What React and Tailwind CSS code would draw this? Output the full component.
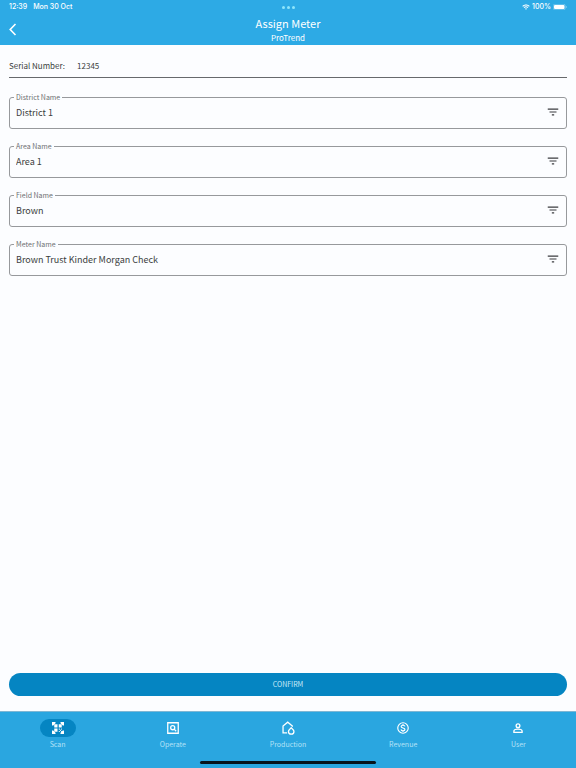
import React from 'react';
import { MdFilterList, MdWifi } from 'react-icons/md';

const fields = [
  { id: 'district', label: 'District Name', value: 'District 1' },
  { id: 'area', label: 'Area Name', value: 'Area 1' },
  { id: 'field', label: 'Field Name', value: 'Brown' },
  { id: 'meter', label: 'Meter Name', value: 'Brown Trust Kinder Morgan Check' },
];

function ScanIcon() {
  return (
    <svg viewBox="0 0 24 24" className="h-3 w-3" fill="currentColor" aria-hidden="true">
      <path d="M0 0h7v2.500L2.500 7H0zM17 0h7v7h-2.500L17 2.500zM0 17h2.500L7 21.500V24H0zM21.500 17H24v7h-7v-2.500z" />
      <path d="M4.500 4.500h6.500V11H4.500zM13.500 4.500h6V11h-6zM4.500 13H11v6.500H4.500z" />
      <path
        d="M13.500 13H16v2.500h-2.500zM18 13h2v2.500h-2zM16 15.500h2V18h-2zM13.500 18H16v2h-2.500zM18 18h2v2h-2z"
        opacity="0.8"
      />
    </svg>
  );
}

function OperateIcon() {
  return (
    <svg
      viewBox="0 0 24 24"
      className="h-3.5 w-3.5"
      fill="none"
      stroke="currentColor"
      strokeWidth="2.2"
      aria-hidden="true"
    >
      <path d="M3 3h18v18H3z" />
      <circle cx="11.5" cy="11.5" r="3.5" />
      <path d="M14 14l3.500 3.500" />
    </svg>
  );
}

function ProductionIcon() {
  return (
    <svg
      viewBox="0 0 24 24"
      className="h-3.5 w-3.5"
      fill="none"
      stroke="currentColor"
      strokeWidth="2.2"
      aria-hidden="true"
    >
      <path d="M10.500 20.500H3.500V8.500L11.500 2L19.500 8.500V10" />
      <path d="M17.500 11.500c2.500 2.200 4.700 4 4.700 6.300a4.700 4.700 0 0 1-9.400 0c0-2.300 2.200-4.100 4.700-6.300z" />
    </svg>
  );
}

function RevenueIcon() {
  return (
    <svg
      viewBox="0 0 24 24"
      className="h-3.5 w-3.5"
      fill="none"
      stroke="currentColor"
      strokeWidth="2"
      aria-hidden="true"
    >
      <circle cx="12" cy="12" r="9" />
      <path d="M15.300 9.300C15 7.900 13.700 7.300 12 7.300c-1.900 0-3.200.9-3.200 2.300 0 3.200 6.500 1.500 6.500 4.800 0 1.500-1.400 2.300-3.300 2.300-1.800 0-3.200-.8-3.400-2.300M12 5v2.300M12 16.700V19" />
    </svg>
  );
}

function UserIcon() {
  return (
    <svg
      viewBox="0 0 24 24"
      className="h-3.5 w-3.5"
      fill="none"
      stroke="currentColor"
      strokeWidth="2.3"
      aria-hidden="true"
    >
      <circle cx="12" cy="8" r="3.2" />
      <path d="M5 19.500V17c0-2 3.800-3.200 7-3.200s7 1.200 7 3.200v2.500z" />
    </svg>
  );
}

const tabs = [
  { name: 'Scan', icon: <ScanIcon />, active: true },
  { name: 'Operate', icon: <OperateIcon /> },
  { name: 'Production', icon: <ProductionIcon /> },
  { name: 'Revenue', icon: <RevenueIcon /> },
  { name: 'User', icon: <UserIcon /> },
];

function StatusBar() {
  return (
    <div className="grid grid-cols-3 items-center px-[9px] font-['Inter',sans-serif] text-[7px] leading-[14px] font-medium">
      <div className="flex gap-1.5">
        <span>12:39</span>
        <span>Mon 30 Oct</span>
      </div>
      <div className="flex justify-center gap-0.5 text-[#8fe6fb]">
        <span className="h-[3px] w-[3px] rounded-full bg-current" />
        <span className="h-[3px] w-[3px] rounded-full bg-current" />
        <span className="h-[3px] w-[3px] rounded-full bg-current" />
      </div>
      <div className="flex items-center justify-end gap-0.5">
        <MdWifi className="h-2 w-2" aria-hidden="true" />
        <span>100%</span>
        <svg viewBox="0 0 28 12" className="h-1.5 w-3.5" aria-hidden="true">
          <rect x="0.5" y="0.5" width="24" height="11" rx="3" fill="none" stroke="#a9dcf5" />
          <rect x="2" y="2" width="21" height="8" rx="2" fill="white" />
          <path d="M26 4c2 .5 2 3.500 0 4z" fill="#a9dcf5" />
        </svg>
      </div>
    </div>
  );
}

function Field({ id, label, value }) {
  return (
    <fieldset className="min-w-0 rounded-[3px] border border-[#97999c] pl-1">
      <legend className="px-0.5 text-[7px] leading-[10px] text-[#6c6e71]">
        <label htmlFor={id} className="block">
          {label}
        </label>
      </legend>
      <div className="flex items-center pr-1.5 pb-1.5">
        <input
          id={id}
          type="text"
          defaultValue={value}
          className="h-5 min-w-0 flex-1 bg-transparent px-0.5 text-[9px] text-[#3b3d40] outline-none"
        />
        <button type="button" aria-label={`Filter ${label}`} className="text-[#3b3d40]">
          <MdFilterList className="h-3.5 w-3.5" aria-hidden="true" />
        </button>
      </div>
    </fieldset>
  );
}

export default function App() {
  return (
    <div className="flex min-h-screen flex-col bg-[#fcfdff] font-['Noto_Sans_CJK_SC',sans-serif]">
      <header className="bg-[#2daae5] text-white">
        <StatusBar />
        <div className="grid grid-cols-[1fr_auto_1fr] items-start pb-0.5">
          <button type="button" aria-label="Back" className="justify-self-start px-2 pt-2">
            <svg
              viewBox="0 0 10 14"
              className="h-3.5 w-2.5"
              fill="none"
              stroke="currentColor"
              strokeWidth="1.6"
              aria-hidden="true"
            >
              <path d="M7.500 2L2.200 7.500l5.300 5.500" />
            </svg>
          </button>
          <div className="text-center">
            <h1 className="text-[11px] leading-[19px]">Assign Meter</h1>
            <p className="text-[8px] leading-[10px]">ProTrend</p>
          </div>
        </div>
      </header>

      <main className="flex flex-1 flex-col px-[9px] pb-[15px]">
        <div className="flex gap-3 border-b border-[#67696c] pt-3 pb-0.5 text-[#3b3d40]">
          <label htmlFor="serial" className="text-[8px] leading-[18px]">
            Serial Number:
          </label>
          <input
            id="serial"
            type="text"
            defaultValue="12345"
            className="h-4 min-w-0 flex-1 bg-transparent text-[8px] outline-none"
          />
        </div>

        <div className="mt-3.5 flex flex-col gap-3">
          {fields.map((field) => (
            <Field key={field.id} {...field} />
          ))}
        </div>

        <button
          type="button"
          className="mt-auto w-full rounded-full bg-[#0585c2] text-[7px] leading-[23px] text-[#c9e9f8]"
        >
          CONFIRM
        </button>
      </main>

      <footer className="border-t border-[#7fb6d3] bg-[#2aa6e0] pb-1">
        <nav className="grid grid-cols-5 pt-[7px]">
          {tabs.map((tab) => (
            <a
              key={tab.name}
              href={`#${tab.name.toLowerCase()}`}
              aria-current={tab.active ? 'page' : undefined}
              className="flex flex-col items-center gap-0.5 text-white"
            >
              <span
                className={`flex h-[18px] w-9 items-center justify-center rounded-full ${
                  tab.active ? 'bg-[#0585c2]' : ''
                }`}
              >
                {tab.icon}
              </span>
              <span className="text-[7px] leading-[10px] text-[#b5e2f7]">{tab.name}</span>
            </a>
          ))}
        </nav>
        <div className="mx-auto mt-3 h-[3px] w-44 rounded-full bg-[#06141c]" />
      </footer>
    </div>
  );
}
